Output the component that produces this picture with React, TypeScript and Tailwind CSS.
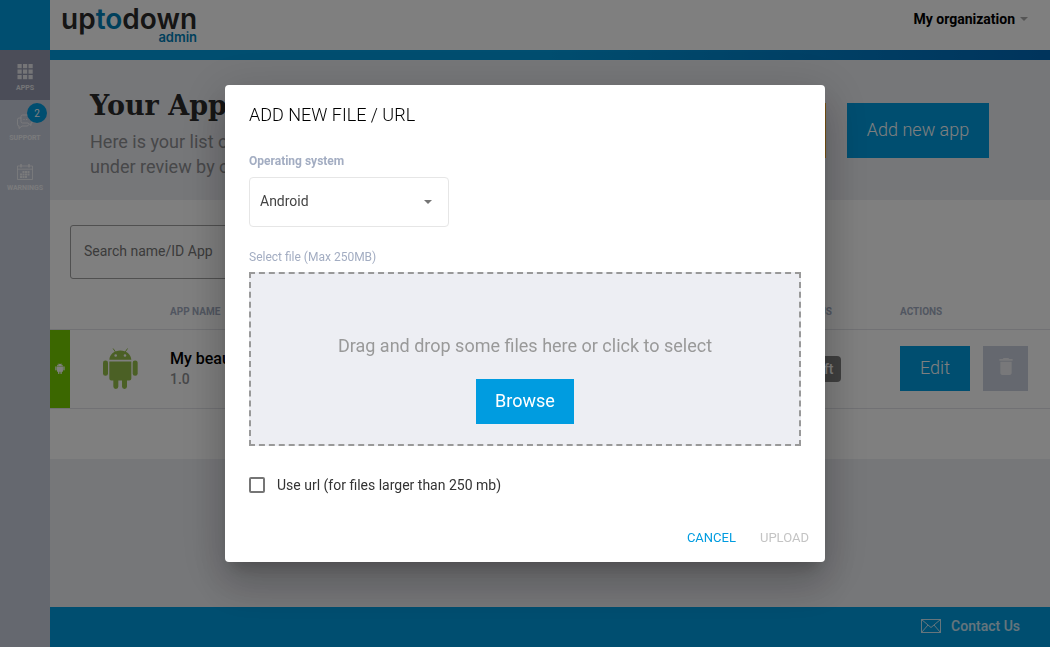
import { useState } from 'react'

const navItems = [
  { label: 'APPS', icon: 'grid', active: true, badge: '' },
  { label: 'SUPPORT', icon: 'chat', active: false, badge: '2' },
  { label: 'WARNINGS', icon: 'calendar', active: false, badge: '' },
]

const AndroidIcon = ({ className }: { className: string }) => (
  <svg viewBox="158 176 105 122" className={className} fill="currentColor">
    <path d="M189 178l8 12M231 178l-8 12" stroke="currentColor" strokeWidth="3" strokeLinecap="round" />
    <path
      fillRule="evenodd"
      d="M177 211c1-17 15-28 33-28s32 11 33 28zM196 194a4 4 0 1 0 0 8a4 4 0 0 0 0-8zM224 194a4 4 0 1 0 0 8a4 4 0 0 0 0-8z"
    />
    <path d="M177 216h66v51q0 6-6 6h-7v18a7 7 0 0 1-15 0v-18h-11v18a7 7 0 0 1-15 0v-18h-6q-6 0-6-6z" />
    <rect x="158" y="213" width="15" height="46" rx="7" />
    <rect x="247" y="213" width="15" height="46" rx="7" />
  </svg>
)

const NavIcon = ({ name }: { name: string }) => {
  if (name === 'grid') {
    return (
      <svg viewBox="0 0 16 16" className="h-4 w-4" fill="currentColor">
        {[0, 5.5, 11].map((y) =>
          [0.5, 6, 11.5].map((x) => (
            <rect key={`${x}-${y}`} x={x} y={y} width="4.2" height="4.2" />
          ))
        )}
      </svg>
    )
  }
  if (name === 'chat') {
    return (
      <svg viewBox="0 0 16 16" className="h-4 w-4" fill="none" stroke="currentColor" strokeWidth="0.9">
        <path d="M5.500 1h8.500q1.500 0 1.500 1.500v5q0 1.500-1.500 1.500v2.500L11 9H5.500Q4 9 4 7.500v-5Q4 1 5.500 1z" />
        <path d="M4 4H2Q.5 4 .5 5.500v5Q.5 12 2 12v2.500L5 12h5q1.500 0 1.500-1.500" />
        <path d="M6.500 5.500h1M9.200 5.500h1M12 5.500h1" strokeWidth="1.200" />
      </svg>
    )
  }
  return (
    <svg viewBox="0 0 16 16" className="h-4 w-4" fill="none" stroke="currentColor" strokeWidth="0.9">
      <path d="M.5 2h15v13.500H.5zM.5 5.200h15" />
      <path d="M4 0v3.500M12 0v3.500" strokeWidth="1.500" />
      <path d="M5.500 8h7.500M3 10.500h10M3 13h7.500" strokeWidth="1.800" strokeDasharray="2 .5" />
    </svg>
  )
}

const Sidebar = () => (
  <nav className="flex w-[50px] shrink-0 flex-col bg-[#cbd0de]">
    <div className="h-[50px] bg-[#009ce0]" />
    {navItems.map((item) => (
      <a
        key={item.label}
        href="#"
        className={`relative flex h-[50px] flex-col items-center gap-1 pt-[14px] text-white/80 ${
          item.active ? 'bg-[#969bb0]' : ''
        }`}
      >
        <NavIcon name={item.icon} />
        <span className="text-[7px] leading-[8px] font-bold">{item.label}</span>
        {item.badge && (
          <span className="absolute top-[3px] right-[3px] flex h-5 w-5 items-center justify-center rounded-full bg-[#009ce0] text-[10px] text-white">
            {item.badge}
          </span>
        )}
      </a>
    ))}
  </nav>
)

const Header = () => (
  <header>
    <div className="flex h-[50px] items-start justify-between bg-white pr-[22px] pl-[11px]">
      <div className="flex flex-col items-end font-['Inter'] font-semibold">
        <span className="pt-[6px] text-[28px] leading-[26px] text-[#2b2b2b]">
          up<span className="text-[#0080b8]">to</span>down
        </span>
        <span className="text-[13px] leading-[10px] text-[#0080b8]">admin</span>
      </div>
      <button className="flex items-center gap-[5px] pt-[9px] text-sm font-bold text-black" type="button">
        My organization
        <svg viewBox="0 0 8 4" className="h-1 w-2" fill="#aaaaaa">
          <path d="M0 0h8L4 4z" />
        </svg>
      </button>
    </div>
    <div className="h-[10px] bg-linear-to-r from-[#009ce0] from-50% to-[#0068b8]" />
  </header>
)

const Hero = () => (
  <section className="flex h-[140px] items-center justify-between bg-[#edeef3] pr-[61px] pl-10">
    <div className="pt-[6px]">
      <h1 className="mb-1 font-['DejaVu_Serif'] text-[27px] leading-[38px] font-bold text-[#2b2b2b]">Your Apps</h1>
      <p className="text-lg leading-[25px] whitespace-nowrap text-[#8f9093]">
        Here is your list of apps.
        <br />
        under review by our team.
      </p>
    </div>
    <div className="flex gap-[21px]">
      <button className="h-[55px] bg-[#f5a623] px-5 text-lg font-light text-white" type="button">
        Add file
      </button>
      <button className="h-[55px] w-[142px] bg-[#009ce0] text-lg font-light text-white" type="button">
        Add new app
      </button>
    </div>
  </section>
)

const AppList = () => (
  <section className="bg-white pt-[25px] pb-[50px]">
    <input
      className="ml-5 block h-[54px] w-[400px] rounded-[3px] border border-[#a0a0a0] px-[13px] pb-[2px] text-sm placeholder:text-[#777]"
      placeholder="Search name/ID App"
      aria-label="Search name/ID App"
    />
    <table className="mt-[14px] w-full table-fixed text-left">
      <thead>
        <tr className="h-9 border-b border-[#e2e3e8] text-[10px] text-[#a3adc2]">
          <th className="w-5" />
          <th className="w-[100px]" />
          <th className="pt-[2px]">APP NAME</th>
          <th className="w-[105px] pt-[2px]">STATUS</th>
          <th className="w-[150px] pt-[2px]">ACTIONS</th>
        </tr>
      </thead>
      <tbody>
        <tr className="h-[79px] border-b border-[#e2e3e8]">
          <td className="bg-[#76ce00]">
            <AndroidIcon className="mx-auto h-[11px] w-[10px] text-white" />
          </td>
          <td>
            <AndroidIcon className="mx-auto h-[41px] w-[35px] text-[#97c04a]" />
          </td>
          <td>
            <p className="text-base leading-[21px] font-medium text-black">My beautiful app</p>
            <p className="text-sm leading-[21px] font-medium text-[#8f9093]">1.0</p>
          </td>
          <td>
            <span className="block h-[26px] w-[46px] rounded-[4px] bg-[#808080] text-center text-sm leading-[26px] font-medium text-white">
              Draft
            </span>
          </td>
          <td>
            <div className="flex gap-[13px]">
              <button className="h-[45px] w-[70px] bg-[#009ce0] pb-[2px] text-lg font-light text-white" type="button">
                Edit
              </button>
              <button
                className="flex h-[45px] w-[45px] items-center justify-center bg-[#cbd0de] pb-1 text-white/70"
                type="button"
                aria-label="Delete"
              >
                <svg viewBox="5 3 14 18" className="h-[17px] w-[14px]" fill="currentColor">
                  <path d="M6 19c0 1.100.9 2 2 2h8c1.100 0 2-.9 2-2V7H6v12zM19 4h-3.500l-1-1h-5l-1 1H5v2h14V4z" />
                </svg>
              </button>
            </div>
          </td>
        </tr>
      </tbody>
    </table>
  </section>
)

const Footer = () => (
  <footer className="mt-auto flex h-10 items-center justify-end bg-[#009ce0] pr-[30px]">
    <a href="#" className="flex items-center gap-[10px] pb-[2px] text-sm font-medium text-white/80">
      <svg viewBox="0 0 20 14" className="h-[14px] w-5" fill="none" stroke="currentColor">
        <path d="M.5.5h19v13H.5zM.5.5L10 8.500L19.500.5M.5 13.500L7 6M19.500 13.500L13 6" />
      </svg>
      Contact Us
    </a>
  </footer>
)

const UploadDialog = () => {
  const [useUrl, setUseUrl] = useState(false)

  return (
    <div className="fixed inset-0 flex items-center justify-center bg-black/50">
      <div
        className="w-[600px] rounded-[4px] bg-white pt-4 shadow-[0_11px_15px_-7px_rgba(0,0,0,0.2),0_24px_38px_3px_rgba(0,0,0,0.14),0_9px_46px_8px_rgba(0,0,0,0.12)]"
        role="dialog"
        aria-labelledby="dialogTitle"
      >
        <form className="px-6">
          <h2 id="dialogTitle" className="text-lg leading-7 font-light text-black">
            ADD NEW FILE / URL
          </h2>
          <label htmlFor="os" className="mt-6 block text-xs leading-4 font-bold text-[#a3adc2]">
            Operating system
          </label>
          <div className="relative mt-2 w-[200px]">
            <select
              id="os"
              className="h-[50px] w-full appearance-none rounded-[4px] border border-[#e6e6e6] bg-white px-[10px] pb-[2px] text-sm text-[#444]"
            >
              <option>Android</option>
              <option>Windows</option>
              <option>Mac</option>
            </select>
            <svg
              viewBox="0 0 8 4"
              className="pointer-events-none absolute top-[23px] right-[17px] h-1 w-2"
              fill="#757575"
            >
              <path d="M0 0h8L4 4z" />
            </svg>
          </div>
          <p className="mt-[22px] text-xs leading-4 text-[#a3adc2]">Select file (Max 250MB)</p>
          <div className="mt-[7px] flex h-[174px] flex-col items-center justify-end gap-[21px] border-2 border-dashed border-[#999] bg-[#edeef3] pb-5">
            <p className="text-lg leading-[25px] text-[#999]">Drag and drop some files here or click to select</p>
            <button className="h-[45px] w-[98px] bg-[#009ce0] pb-[2px] text-lg text-white" type="button">
              Browse
            </button>
          </div>
          <label className="mt-[29px] flex items-center gap-3 text-sm leading-5 text-[#333]">
            <input
              type="checkbox"
              className="h-4 w-4 appearance-none rounded-[2px] border-2 border-[#757575] checked:bg-[#009ce0]"
              checked={useUrl}
              onChange={(e) => setUseUrl(e.target.checked)}
            />
            Use url (for files larger than 250 mb)
          </label>
        </form>
        <div className="mt-[25px] flex justify-end gap-2 px-2 pb-[6px] text-[13px]">
          <button className="h-9 px-2 text-[#009ce0]" type="button">
            CANCEL
          </button>
          <button className="h-9 px-2 text-[#c4c4c4]" type="button" disabled>
            UPLOAD
          </button>
        </div>
      </div>
    </div>
  )
}

const App = () => (
  <div className="flex min-h-screen bg-[#edeef3] font-['Roboto',sans-serif]">
    <Sidebar />
    <main className="flex min-w-0 flex-1 flex-col">
      <Header />
      <Hero />
      <AppList />
      <Footer />
    </main>
    <UploadDialog />
  </div>
)

export default App
